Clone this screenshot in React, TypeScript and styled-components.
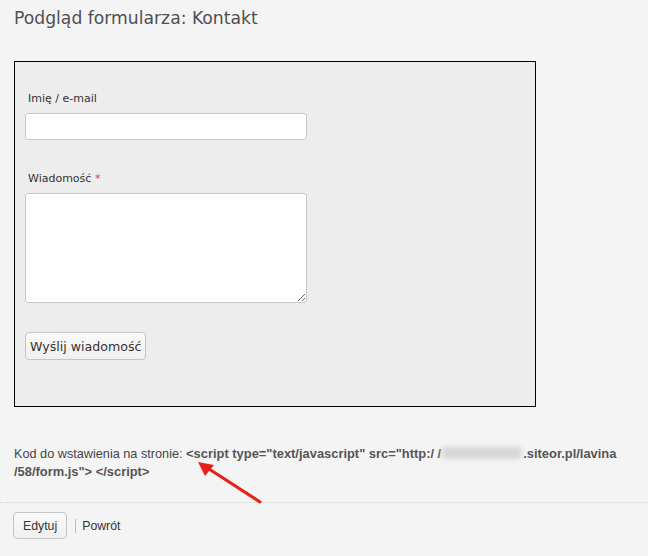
import React from "react";
import styled, { createGlobalStyle } from "styled-components";

const Global = createGlobalStyle`
  html, body { margin: 0; padding: 0; }
  body {
    background: #f4f4f4;
    color: #444;
    font-family: "DejaVu Sans", sans-serif;
  }
`;

const Page = styled.div`
  position: relative;
  width: 648px;
  height: 556px;
  padding: 0 0 0 14px;
  box-sizing: border-box;
  overflow: hidden;
`;

const Title = styled.h1`
  margin: 0;
  padding-top: 6px;
  font-family: "DejaVu Sans", sans-serif;
  font-size: 17.2px;
  font-weight: normal;
  line-height: 24px;
  color: #4f4f52;
`;

const FormBox = styled.div`
  margin-top: 31px;
  width: 522px;
  height: 346px;
  box-sizing: border-box;
  border: 1px solid #000;
  background: #ededed;
  padding: 29px 0 0 10px;
  display: flex;
  flex-direction: column;
  align-items: flex-start;
`;

const Label = styled.label<{ $gap?: number }>`
  display: block;
  margin-top: ${(p) => p.$gap ?? 0}px;
  margin-bottom: 7px;
  margin-left: 3px;
  font-family: "DejaVu Sans", sans-serif;
  font-size: 11px;
  line-height: 15px;
  color: #333;
`;

const Required = styled.span`
  color: #e33;
`;

const TextInput = styled.input`
  width: 282px;
  height: 27px;
  box-sizing: border-box;
  border: 1px solid #c8c8c8;
  border-radius: 3px;
  background: #fff;
  margin: 0;
  outline: none;
`;

const TextArea = styled.textarea`
  width: 282px;
  height: 110px;
  box-sizing: border-box;
  border: 1px solid #c8c8c8;
  border-radius: 3px;
  background: #fff;
  margin: 0;
  resize: both;
  outline: none;
`;

const SubmitButton = styled.button`
  margin-top: 29px;
  height: 28px;
  padding: 0 4px;
  border: 1px solid #c4c4c4;
  border-radius: 4px;
  background: linear-gradient(#fafafa, #f0f0f0);
  font-family: "DejaVu Sans", sans-serif;
  font-size: 12.6px;
  color: #333;
`;

const CodeLine = styled.p`
  margin: 38px 0 0;
  font-family: "Liberation Sans", sans-serif;
  font-size: 12.7px;
  line-height: 18px;
  color: #444;
`;

const Code = styled.span`
  font-family: "Liberation Sans", sans-serif;
  font-size: 12.9px;
  font-weight: bold;
  color: #555;
`;

const Blurred = styled.span`
  display: inline-block;
  width: 80px;
  height: 12px;
  margin: 0 1px 0 1px;
  vertical-align: -1px;
  background: #d6d6d6;
  border-radius: 4px;
  filter: blur(2.5px);
`;

const Separator = styled.hr`
  margin: 21px 0 0 -14px;
  border: 0;
  border-top: 1px dotted #d8d8d8;
  width: 648px;
`;

const Actions = styled.div`
  margin-top: 9px;
  display: flex;
  align-items: center;
  gap: 6px;
`;

const EditButton = styled.button`
  height: 27px;
  padding: 0 9px;
  border: 1px solid #c4c4c4;
  border-radius: 4px;
  background: linear-gradient(#fafafa, #efefef);
  font-family: "Liberation Sans", sans-serif;
  font-size: 12.3px;
  color: #333;
  margin-left: -1px;
`;

const Divider = styled.span`
  width: 1px;
  height: 14px;
  background: #aac4de;
  margin-left: 2px;
`;

const BackLink = styled.a`
  font-family: "Liberation Sans", sans-serif;
  font-size: 12.3px;
  color: #333;
  text-decoration: none;
`;

const Arrow = styled.svg`
  position: absolute;
  left: 190px;
  top: 455px;
  overflow: visible;
`;

export default function App() {
  return (
    <>
      <Global />
      <Page>
        <Title>Podgląd formularza: Kontakt</Title>
        <FormBox>
          <Label>Imię / e-mail</Label>
          <TextInput type="text" />
          <Label $gap={31}>
            Wiadomość <Required>*</Required>
          </Label>
          <TextArea />
          <SubmitButton>Wyślij wiadomość</SubmitButton>
        </FormBox>
        <CodeLine>
          Kod do wstawienia na stronie:{" "}
          <Code>
            &lt;script type="text/javascript" src="http:/ /<Blurred />.siteor.pl/lavina
            <br />
            /58/form.js"&gt; &lt;/script&gt;
          </Code>
        </CodeLine>
        <Separator />
        <Actions>
          <EditButton>Edytuj</EditButton>
          <Divider />
          <BackLink href="#">Powrót</BackLink>
        </Actions>
        <Arrow width="80" height="60">
          <line x1="70" y1="47" x2="16" y2="12" stroke="#e8201a" strokeWidth="3" strokeLinecap="round" />
          <polygon points="8,7 24,10 15,21" fill="#e8201a" />
        </Arrow>
      </Page>
    </>
  );
}
